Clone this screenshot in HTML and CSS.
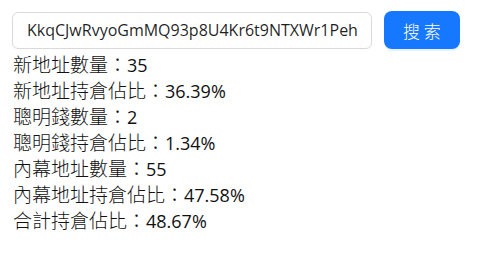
FILE: index.html
```html
<!DOCTYPE html>
<html>
<head>
<meta charset="utf-8">
<link rel="stylesheet" href="styles.css">
</head>
<body>
<div class="page">
  <div class="search-row">
    <input class="search-input" type="text" value="KkqCJwRvyoGmMQ93p8U4Kr6t9NTXWr1Peh">
    <button class="search-btn">搜 索</button>
  </div>
  <div class="stats">
    <div class="stat"><span class="label">新地址數量：</span>35</div>
    <div class="stat"><span class="label">新地址持倉佔比：</span>36.39%</div>
    <div class="stat"><span class="label">聰明錢數量：</span>2</div>
    <div class="stat"><span class="label">聰明錢持倉佔比：</span>1.34%</div>
    <div class="stat"><span class="label">內幕地址數量：</span>55</div>
    <div class="stat"><span class="label">內幕地址持倉佔比：</span>47.58%</div>
    <div class="stat"><span class="label">合計持倉佔比：</span>48.67%</div>
  </div>
</div>
</body>
</html>
```

FILE: styles.css
```css
html, body {
  margin: 0;
  padding: 0;
  background: #ffffff;
}
body {
  font-family: "Open Sans", "Noto Sans CJK TC", sans-serif;
  color: #000000;
}
.page {
  padding: 11px 12px 0 12px;
}
.search-row {
  display: flex;
  align-items: center;
  gap: 12px;
  height: 38px;
}
.search-input {
  box-sizing: border-box;
  width: 360px;
  height: 37px;
  padding: 0 14px;
  border: 1px solid #d9d9d9;
  border-radius: 6px;
  font-family: "Open Sans", sans-serif;
  font-size: 16px;
  color: rgba(0,0,0,0.88);
  outline: none;
  background: #fff;
}
.search-btn {
  box-sizing: border-box;
  width: 76px;
  height: 38px;
  border: none;
  border-radius: 8px;
  background: #1677ff;
  color: #fff;
  font-family: "Noto Sans CJK TC", sans-serif;
  font-weight: 300;
  font-size: 17px;
  box-shadow: 0 2px 0 rgba(5,145,255,0.1);
  padding: 0;
}
.stats {
  margin-top: 3px;
  font-family: "Open Sans", sans-serif;
  font-size: 18px;
  line-height: 26px;
  color: #111;
}
.stat {
  padding-left: 1px;
  white-space: nowrap;
}
.label {
  font-family: "Noto Sans CJK TC", sans-serif;
  font-weight: 300;
  font-size: 19px;
  line-height: 20px;
}
```
